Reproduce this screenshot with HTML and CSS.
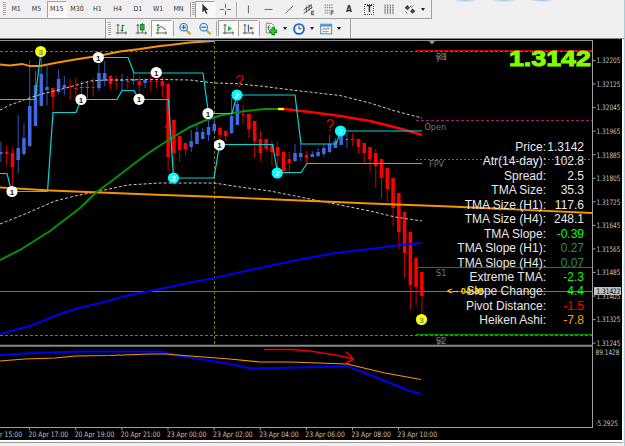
FILE: index.html
```
<!DOCTYPE html>
<html lang="en">

<head>
    <meta charset="UTF-8">
    <meta name="viewport" content="width=device-width, initial-scale=1.0">
    <title>Chart M15</title>
    <link rel="stylesheet" href="styles.css">
</head>

<body>
    <div class="window">
        <header class="toolbars">
            <div class="toolbar top-bar">
                <span class="grip"></span>
                <button class="frame">M1</button>
                <button class="frame">M5</button>
                <button class="frame pressed">M15</button>
                <button class="frame">M30</button>
                <button class="frame">H1</button>
                <button class="frame">H4</button>
                <button class="frame">D1</button>
                <button class="frame">W1</button>
                <button class="frame">MN</button>
                <span class="divider"></span>
                <span class="grip"></span>
                <button class="tool pressed"><svg viewBox="0 0 16 16"><path d="M5 2v10l2.400-2.200 1.800 4 1.600-.8-1.800-3.800h3z" fill="#333"/></svg></button>
                <button class="tool"><svg viewBox="0 0 16 16"><path d="M8.500 2v5M8.500 10v5M2 8.500h5M10 8.500h5" stroke="#555"/></svg></button>
                <span class="divider"></span>
                <button class="tool"><svg viewBox="0 0 16 16"><path d="M8.500 4v9" stroke="#555"/></svg></button>
                <button class="tool"><svg viewBox="0 0 16 16"><path d="M4 8.500h9" stroke="#555"/></svg></button>
                <button class="tool"><svg viewBox="0 0 16 16"><path d="M4 13l8.500-8.500" stroke="#555"/></svg></button>
                <button class="tool"><svg viewBox="0 0 16 16"><path d="M2 9l9-6M2 13l10-7M5 5v7M8 3v7M10.500 3v5M14 10.500h-3v4h3M11 12.500h2.500" stroke="#444" fill="none"/></svg></button>
                <button class="tool"><svg viewBox="0 0 16 16"><path d="M3 3.500h10M3 6.500h10M3 9.500h10M3 12.500h6" stroke="#555" stroke-dasharray="1.500 1"/><path d="M13.500 10.500h-3v4.500M10.500 12.500h2.500" stroke="#444" fill="none"/></svg></button>
                <button class="tool letter">A</button>
                <button class="tool letter"><span class="text-label">T</span></button>
                <button class="tool"><svg viewBox="0 0 16 16"><path d="M3.500 3v11M6.500 3v11M9.500 3v11M12.500 3v11" stroke="#444" stroke-dasharray="2 .5"/></svg></button>
                <button class="tool"><svg viewBox="0 0 16 16"><path d="M2 6.500l3-3 3 3-3 3zM8 10.500l3-3 3 3-3 3z" fill="#444"/><path d="M8 4.500l1.500 1.500 2-2M3 11l2 2" stroke="#444" fill="none"/></svg></button>
                <span class="drop"></span>
            </div>
            <div class="lower-bars">
                <div class="toolbar blank-bar"></div>
                <div class="toolbar chart-bar">
                    <span class="grip"></span>
                    <button class="tool"><svg viewBox="0 0 16 16"><path d="M4.500 3v11M2 12.500h12M3 4.500l1.500-2 1.500 2M12.500 11l2 1.500-2 1.500" stroke="#555" fill="none"/><path d="M9.500 3v8M9.500 4h2.500M7.500 9.500h2" stroke="#0a8a1e" stroke-width="1.300"/></svg></button>
                    <button class="tool"><svg viewBox="0 0 16 16"><path d="M4.500 3v11M2 12.500h12M3 4.500l1.500-2 1.500 2M12.500 11l2 1.500-2 1.500" stroke="#555" fill="none"/><path d="M9.500 1v11" stroke="#087018"/><rect x="7.500" y="3" width="4" height="6" fill="#19c237" stroke="#087018"/></svg></button>
                    <button class="tool pressed"><svg viewBox="0 0 16 16"><path d="M4.500 3v11M2 12.500h12M3 4.500l1.500-2 1.500 2M12.500 11l2 1.500-2 1.500" stroke="#555" fill="none"/><path d="M4 10c2-7 6-5 9-1" stroke="#25a03a" fill="none" stroke-width="1.300"/></svg></button>
                    <span class="divider"></span>
                    <button class="tool"><svg viewBox="0 0 16 16"><path d="M9.500 9.500l5 4.500" stroke="#d8a520" stroke-width="2.600"/><circle cx="6.500" cy="6" r="4.300" fill="#e5f4ff" stroke="#2874b8" stroke-width="1.300"/><path d="M4 6h5M6.500 3.500v5" stroke="#1762a8" stroke-width="1.400"/></svg></button>
                    <button class="tool"><svg viewBox="0 0 16 16"><path d="M9.500 9.500l5 4.500" stroke="#d8a520" stroke-width="2.600"/><circle cx="6.500" cy="6" r="4.300" fill="#e5f4ff" stroke="#2874b8" stroke-width="1.300"/><path d="M4 6h5" stroke="#1762a8" stroke-width="1.400"/></svg></button>
                    <span class="divider"></span>
                    <button class="tool pressed"><svg viewBox="0 0 16 16"><path d="M4.500 3v11M2 12.500h12M3 4.500l1.500-2 1.500 2M12.500 11l2 1.500-2 1.500" stroke="#555" fill="none"/><path d="M8 4.500l4.500 3-4.500 3z" fill="#18b336"/></svg></button>
                    <button class="tool pressed"><svg viewBox="0 0 16 16"><path d="M4.500 3v11M2 12.500h12M3 4.500l1.500-2 1.500 2M12.500 11l2 1.500-2 1.500" stroke="#555" fill="none"/><path d="M8.500 3v8" stroke="#2464a8" stroke-width="1.300"/><path d="M14 7h-3" stroke="#c43b1a" stroke-width="1.300"/><path d="M9.500 7l2.500-2v4z" fill="#c43b1a"/></svg></button>
                    <span class="divider"></span>
                    <button class="tool"><svg viewBox="0 0 16 16"><path d="M2.500 1.500h6l3 3v8h-9z" fill="#fff" stroke="#777"/><path d="M5 9.500V5c0-1 1-1.500 2-1M4 6.500h3" stroke="#555" fill="none"/><path d="M10.500 6v9M6 10.500h9" stroke="#087c10" stroke-width="4"/><path d="M10.500 7v7M7 10.500h7" stroke="#22d02c" stroke-width="2.400"/></svg></button>
                    <span class="drop"></span>
                    <button class="tool"><svg viewBox="0 0 16 16"><circle cx="8" cy="8" r="5.600" fill="#f4f9ff" stroke="#1d67c4" stroke-width="2.200"/><path d="M8 4.500v3.500l3-.5" stroke="#333" fill="none"/></svg></button>
                    <span class="drop"></span>
                    <button class="tool"><svg viewBox="0 0 16 16"><rect x="2" y="2.500" width="12.500" height="11" fill="#fff" stroke="#3a78b4"/><path d="M2 4h12.500" stroke="#4a94dc" stroke-width="2.500"/><path d="M4 8.500l2-1 2 1 2-1.500 2 1" stroke="#a33" fill="none"/><path d="M4 11.500l2-1 2 1 3-1" stroke="#2a9a40" fill="none"/></svg></button>
                    <span class="drop"></span>
                </div>
            </div>
        </header>

        <main class="chart">
            <svg class="plot" viewBox="0 39 622 401">
                <!-- levels -->
                <path class="day" d="M214.500 41V345"/>
                <path class="dots-blue" d="M0 51.500H592M0 335.500H592"/>
                <path class="slate" d="M0 291.500H592"/>
                <path stroke="#c00000" d="M416 50.500H592"/>
                <path class="dots-pink" d="M416 120.500H592"/>
                <path class="dots-gray" d="M416 159.500H592"/>
                <path stroke="#009000" d="M416 267.500H592M416 334.500H592"/>

                <g id="candles"></g>

                <!-- averages and bands -->
                <path class="band" d="M0 110L10 105 35 96 50 92 70 87 90 81 105 80 160 79.500 190 80 214 83 235 83.500 260 86 300 91 340 95.500 370 103 395 111 422 118"/>
                <path class="band" d="M0 224L25 214 55 201 75 196 95 192 128 185 160 183 214 183 240 187 270 191 300 197 340 205 370 211 395 217 422 221"/>
                <path class="orange" d="M0 64.500L10 65.500 22 64 30 66 40 66 55 63 75 59.500 98 56 120 51.500 140 49 160 46 170 45 190 42.500 214 41"/>
                <path class="orange" d="M0 187.500L50 190.500 100 192.500 150 194.500 220 197 300 200.500 370 203.500 450 206.500 592 213"/>
                <path class="blue" d="M0 334L30 326 55 316 75 309 100 303 130 295 160 289 190 282.500 214 278 250 270 300 259.500 335 253 370 249 400 245 422 243"/>
                <path class="green" d="M0 260L20 250 50 231 80 208 96 192.500 113 180 135 163 150 152 170 139 190 127 205 120.500 220 115.500 245 111 265 109 280 109"/>
                <path class="red" d="M284 109L310 112 340 116 370 121 400 128.500 422 135"/>
                <path class="yellow" d="M278 109H284"/>

                <!-- swing levels -->
                <path class="swing" d="M0 99.500H35L40.500 55M98 57.500H128L134 73H203L208.500 113.500H232L237 95H295L301 144H336L341 131H422"/>
                <path class="swing" d="M0 173.500H7L11.500 191.500H47.500L53 112.500H76L81 99.500H117L122 90.500H134L139 99.500H168.500L173.500 178H214L219.500 144.500H272.500L277.500 172.500H301L307 163.500H422"/>
                <g id="badges"></g>

                <g class="hand">
                    <text x="235" y="87">?</text>
                    <text x="325.500" y="131">?</text>
                    <path d="M164 127h3v-4v6" stroke-width="1"/>
                    <path d="M264 349.500H290L310 351 335 355 352 358.500M346 351.500L353.500 359 346 363.500"/>
                </g>

                <g class="level-names">
                    <text x="436" y="60">yH</text>
                    <text x="436" y="60">R1</text>
                    <text x="424.500" y="129.500">Open</text>
                    <text x="429" y="167">FPV</text>
                    <text x="436" y="275.500">S1</text>
                    <text x="436" y="343.500">S2</text>
                    <text x="436" y="343.500">yL</text>
                </g>

                <!-- lower indicator -->
                <path class="blue" d="M0 355L25 353.500 50 352.500 80 351.500H160L175 355 200 359 230 364 250 368.300 275 368 320 367 347 366 375 377 410 391 421 394"/>
                <path class="orange thin" d="M0 361L25 359 55 358 75 356 110 355.500 150 354 165 354 190 356 230 359 260 362 290 362 347 364 385 373 421 379.500"/>

                <!-- frame -->
                <path d="M0 40.500H593" stroke="#909090"/>
                <path d="M0 345.800H593" stroke="#888" stroke-width="2"/>
                <path d="M0 427.500H593M592.500 41V428" stroke="#a0a0a0"/>
                <path d="M429 41h6l-3 3.500z" fill="#7f9fc8"/>
                <g id="axis"></g>
            </svg>

            <div class="readout">
                <div class="big-price">1.3142</div>
                <dl class="stats">
                    <dt>Price:</dt><dd>1.3142</dd>
                    <dt>Atr(14-day):</dt><dd>102.8</dd>
                    <dt>Spread:</dt><dd>2.5</dd>
                    <dt>TMA Size:</dt><dd>35.3</dd>
                    <dt>TMA Size (H1):</dt><dd>117.6</dd>
                    <dt>TMA Size (H4):</dt><dd>248.1</dd>
                    <dt>TMA Slope:</dt><dd class="up">-0.39</dd>
                    <dt>TMA Slope (H1):</dt><dd class="calm">0.27</dd>
                    <dt>TMA Slope (H4):</dt><dd class="calm">0.07</dd>
                    <dt>Extreme TMA:</dt><dd class="up">-2.3</dd>
                    <dt>Slope Change:</dt><dd class="up">4.4</dd>
                    <dt>Pivot Distance:</dt><dd class="down">-1.5</dd>
                    <dt>Heiken Ashi:</dt><dd class="warn">-7.8</dd>
                </dl>
            </div>
            <div class="countdown">&lt;-- 04:36</div>
        </main>
    </div>

    <script>
        const svgNs = 'http://www.w3.org/2000/svg';

        function add(parent, name, attrs, text) {
            const node = document.createElementNS(svgNs, name);
            for (const key in attrs) {
                node.setAttribute(key, attrs[key]);
            }
            if (text) {
                node.textContent = text;
            }
            parent.appendChild(node);
        }

        // high, low, body top, body bottom, direction (1 = up)
        const candles = [
            [142, 162, 152, 154, 1], [146, 165, 152, 154, 0], [148, 188, 153, 167, 0], [115, 173, 148, 160, 1],
            [123, 156, 138, 154, 1], [60, 147, 106, 146, 1], [71, 126, 85, 126, 1], [58, 106, 74, 106, 1],
            [66, 105, 87, 90, 1], [88, 111, 88, 97, 0], [70, 94, 79, 92, 1], [76, 95, 85, 88, 1],
            [79, 100, 86, 87, 0], [78, 99, 88, 89, 0], [81, 98, 87, 88, 1], [81, 98, 87, 88, 1],
            [78, 97, 87, 88, 0], [60, 91, 73, 88, 1], [61, 86, 73, 81, 1], [76, 89, 76, 84, 0],
            [76, 89, 80, 81, 0], [74, 90, 80, 81, 1], [76, 89, 81, 82, 0], [71, 85, 79, 81, 1],
            [76, 99, 81, 85, 0], [78, 88, 80, 83, 1], [71, 92, 81, 82, 0], [71, 88, 81, 82, 0],
            [77, 97, 81, 86, 0], [83, 171, 84, 157, 0], [120, 173, 120, 153, 0], [136, 162, 136, 150, 0],
            [143, 155, 143, 149, 0], [130, 152, 141, 147, 1], [125, 144, 132, 144, 1], [128, 139, 132, 139, 1],
            [120, 141, 127, 135, 1], [118, 133, 124, 131, 1], [126, 141, 128, 135, 0], [130, 141, 131, 136, 0],
            [98, 134, 116, 133, 1], [100, 125, 104, 125, 1], [105, 124, 114, 115, 0], [114, 138, 114, 129, 0],
            [121, 158, 121, 141, 0], [131, 161, 139, 153, 0], [139, 152, 139, 149, 0], [141, 165, 144, 152, 0],
            [141, 168, 147, 156, 0], [151, 171, 152, 171, 0], [152, 172, 159, 163, 0], [144, 162, 153, 161, 1],
            [144, 161, 153, 157, 1], [151, 163, 155, 158, 0], [151, 157, 154, 157, 1], [148, 157, 152, 156, 1],
            [144, 157, 148, 154, 1], [135, 153, 144, 152, 1], [138, 148, 141, 148, 1], [132, 145, 135, 145, 1],
            [133, 148, 139, 140, 1], [133, 146, 139, 140, 0], [139, 154, 139, 147, 0], [143, 163, 143, 153, 0],
            [147, 172, 147, 159, 0], [149, 188, 153, 166, 0], [159, 198, 159, 178, 0], [168, 202, 168, 189, 0],
            [178, 226, 178, 208, 0], [193, 249, 193, 232, 0], [212, 278, 212, 253, 0], [232, 310, 232, 285, 0],
            [258, 305, 258, 287, 0], [272, 315, 272, 296, 0]
        ];

        const candleGroup = document.getElementById('candles');
        candles.forEach((c, i) => {
            const x = 0.9 + i * 5.767;
            const kind = c[4] ? 'bull' : 'bear';
            add(candleGroup, 'rect', { x: x - 0.5, y: c[0], width: 1, height: c[1] - c[0], class: kind + ' wick' });
            add(candleGroup, 'rect', { x: x - 1.75, y: c[2], width: 3.5, height: c[3] - c[2], class: kind });
        });

        const badges = [
            [40.7, 51.5, 3], [98.3, 57.5, 1], [81, 99.5, 1], [139, 99.3, 1], [156.3, 72.5, 1], [12, 191.5, 1],
            [208, 113.5, 1], [219.5, 145, 1], [237, 95, 2], [173.5, 178, 2], [277.2, 173, 2], [340.5, 131, 2],
            [421.5, 319.5, 3]
        ];

        const badgeGroup = document.getElementById('badges');
        badges.forEach(b => {
            add(badgeGroup, 'circle', { cx: b[0], cy: b[1], r: 5.6, class: 'badge-' + b[2] });
            add(badgeGroup, 'text', { x: b[0], y: b[1] + 3, class: 'badge-text-' + b[2] }, String(b[2]));
        });

        const axis = document.getElementById('axis');
        for (let i = 0; i < 13; i++) {
            const y = 60.5 + i * 23.55;
            add(axis, 'path', { d: `M593 ${y}h2.500`, stroke: '#a0a0a0' });
            add(axis, 'text', { x: 596.5, y: y + 2.8, textLength: 24, lengthAdjust: 'spacingAndGlyphs' }, (1.32205 - i * 0.0008).toFixed(5));
        }
        add(axis, 'rect', { x: 594, y: 287, width: 27, height: 8, fill: '#c0c0c0' });
        add(axis, 'text', { x: 596.5, y: 294, textLength: 24, lengthAdjust: 'spacingAndGlyphs', class: 'current' }, '1.31422');
        add(axis, 'text', { x: 595.5, y: 354.5, textLength: 24, lengthAdjust: 'spacingAndGlyphs' }, '89.1428');
        add(axis, 'text', { x: 595.5, y: 425.5, textLength: 22.5, lengthAdjust: 'spacingAndGlyphs' }, '-5.2925');

        const times = ['20 Apr 15:00', '20 Apr 17:00', '20 Apr 19:00', '20 Apr 21:00', '23 Apr 00:00',
            '23 Apr 02:00', '23 Apr 04:00', '23 Apr 06:00', '23 Apr 08:00', '23 Apr 10:00'];
        times.forEach((time, i) => {
            const x = -17 + i * 46.12;
            add(axis, 'path', { d: `M${x + 0.5} 428v2`, stroke: '#a0a0a0' });
            add(axis, 'text', { x: x - 0.5, y: 437, textLength: 39.5, lengthAdjust: 'spacingAndGlyphs' }, time);
        });
    </script>
</body>

</html>
```
FILE: styles.css
```
body {
    margin: 0;
    background-color: #f0f0f0;
    font-family: "Liberation Sans", Arial, sans-serif;
    overflow: hidden;
}

.window {
    box-sizing: border-box;
    width: 625px;
    height: 446px;
    border-right: 1px solid #a9cdd6;
    background-color: #f0f0f0;
}

.toolbars {
    box-sizing: border-box;
    height: 39px;
    border-bottom: 1px solid #7c8480;
    background:
        radial-gradient(ellipse 12px 2px at 465px 0, #8fc0dc, transparent),
        radial-gradient(ellipse 12px 2px at 504px 0, #8fc0dc, transparent),
        radial-gradient(ellipse 12px 2px at 542px 0, #8fc0dc, transparent),
        #f0f0f0;
}

.toolbar {
    box-sizing: border-box;
    display: flex;
    align-items: center;
    height: 19px;
    border-right: 1px solid #a0a0a0;
}

.top-bar {
    width: 432px;
    padding-left: 3px;
    border-bottom: 1px solid #a0a0a0;
}

.lower-bars {
    display: flex;
}

.blank-bar {
    width: 106px;
}

.chart-bar {
    width: 245px;
    padding-left: 2px;
}

.grip {
    flex: none;
    width: 3px;
    height: 14px;
    background: repeating-linear-gradient(#a8a8a8 0 1px, #f0f0f0 1px 2px);
}

.divider {
    flex: none;
    width: 1px;
    height: 15px;
    margin: 0 1px;
    background-color: #a8a8a8;
}

button {
    box-sizing: border-box;
    flex: none;
    display: flex;
    align-items: center;
    justify-content: center;
    height: 17px;
    padding: 0;
    border: 1px solid transparent;
    background: none;
    color: #333;
    font-family: "DejaVu Sans Condensed", "DejaVu Sans", sans-serif;
    font-size: 7px;
}

.frame {
    width: 20.300px;
}

.tool {
    width: 20.200px;
}

.tool svg {
    width: 14px;
    height: 14px;
    fill: none;
}

.pressed {
    border-color: #a0a0a0 #fff #fff #a0a0a0;
    background-color: #f8f8f8;
}

.letter {
    font-size: 8.500px;
    font-weight: bold;
}

.text-label {
    width: 8px;
    border: 1px dotted #555;
    line-height: 9px;
}

.drop {
    flex: none;
    width: 0;
    margin: 0 2px 0 1px;
    border: 2.500px solid transparent;
    border-top: 3px solid #222;
    border-bottom: 0;
}

.chart {
    position: relative;
    box-sizing: border-box;
    width: 624px;
    height: 404px;
    border-right: 2px solid #f4f4f4;
    border-bottom: 1px solid #999;
    background-color: #fff;
}

.plot {
    display: block;
    width: 622px;
    height: 401px;
    background-color: #000;
    fill: none;
}

.day {
    stroke: #808000;
    stroke-dasharray: 3 2;
}

.dots-blue {
    stroke: #4a68e0;
    stroke-dasharray: 3 2;
}

.slate {
    stroke: #5f7896;
}

.dots-pink {
    stroke: #b01478;
    stroke-dasharray: 3 2;
}

.dots-gray {
    stroke: #707070;
    stroke-dasharray: 2 2;
}

.band {
    stroke: #c8c8c8;
    stroke-dasharray: 3 2;
}

.orange {
    stroke: #f59505;
    stroke-width: 1.800;
}

.thin {
    stroke-width: 1.200;
}

.blue {
    stroke: #0000f0;
    stroke-width: 2;
}

.green {
    stroke: #089008;
    stroke-width: 2;
}

.red {
    stroke: #ff0000;
    stroke-width: 2.400;
}

.yellow {
    stroke: #ffff00;
    stroke-width: 2.400;
}

.swing {
    stroke: #00d8d8;
    stroke-width: 1.200;
}

.bull {
    fill: #4169e1;
}

.bear {
    fill: #ff0000;
}

.wick {
    opacity: 0.8;
}

.badge-1 {
    fill: #fff;
}

.badge-2 {
    fill: #00ffff;
}

.badge-3 {
    fill: #ffff00;
}

#badges text {
    font-size: 8px;
    font-weight: bold;
    text-anchor: middle;
}

.badge-text-1 {
    fill: #222;
}

.badge-text-2 {
    fill: #e8ffff;
}

.badge-text-3 {
    fill: #6a8f9a;
}

.hand {
    stroke: #e80000;
    stroke-width: 1.600;
}

.hand text {
    fill: #d00000;
    stroke: none;
    font-size: 16px;
}

.level-names {
    fill: #787878;
    font-family: "DejaVu Sans Condensed", "DejaVu Sans", sans-serif;
    font-size: 9px;
}

#axis text {
    fill: #c0c0c0;
    font-family: "DejaVu Sans Condensed", "DejaVu Sans", sans-serif;
    font-size: 7.500px;
}

#axis .current {
    fill: #000;
}

/* values written over the chart */
.readout {
    position: absolute;
    top: 7px;
    right: 31px;
    display: flex;
    flex-direction: column;
    align-items: flex-end;
    color: #e8e8e8;
}

.big-price {
    height: 94px;
    color: #80ff00;
    font-size: 22.500px;
    font-weight: bold;
    line-height: 26px;
    transform: scaleX(1.19);
    transform-origin: right top;
    -webkit-text-stroke: 1px #80ff00;
}

.stats {
    display: grid;
    grid-template-columns: auto 35px;
    grid-auto-rows: 14.450px;
    column-gap: 3px;
    margin: 0 7px 0 0;
    font-size: 12px;
    line-height: 14.450px;
    text-align: right;
    white-space: nowrap;
}

.stats dd {
    display: flex;
    justify-content: flex-end;
    margin: 0;
}

.up {
    color: #00ff00;
}

.calm {
    color: #2e8b57;
}

.down {
    color: #ff0000;
}

.warn {
    color: #ffa500;
}

.countdown {
    position: absolute;
    top: 247px;
    left: 447px;
    color: #ffd800;
    font-size: 9px;
    font-weight: bold;
    line-height: 11px;
}
```
